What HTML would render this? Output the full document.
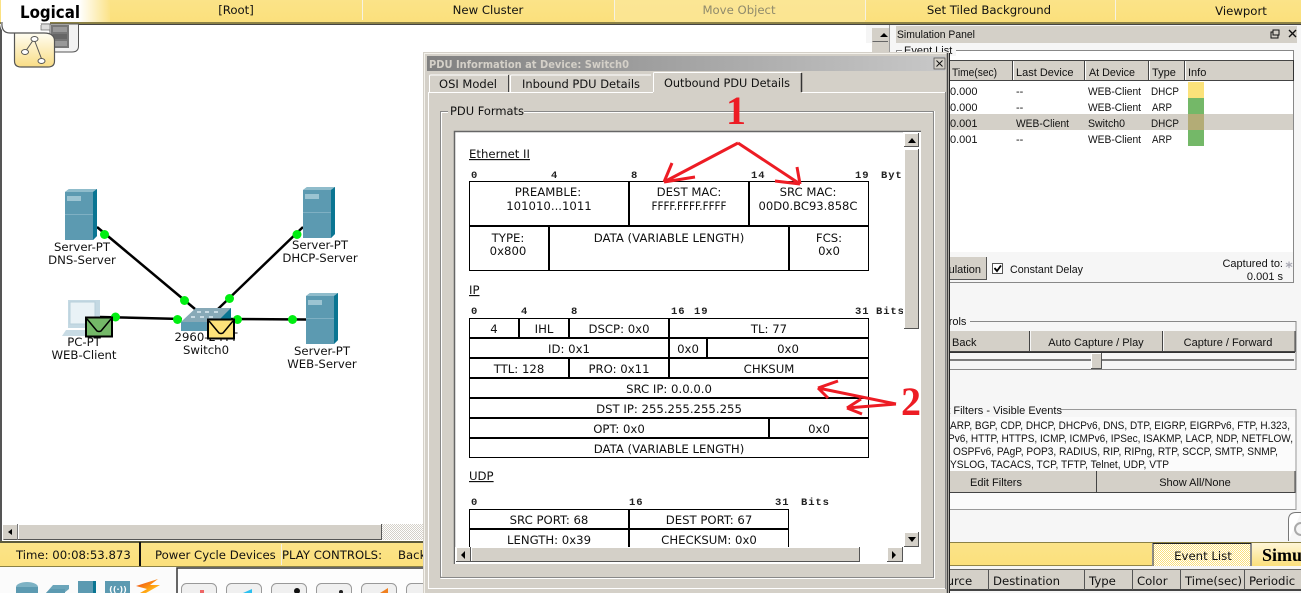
<!DOCTYPE html>
<html><head><meta charset="utf-8"><style>
html,body{margin:0;padding:0;background:#fff;width:1301px;height:593px;overflow:hidden}
svg{display:block}
text{fill:#111}
.v{font:11.7px "DejaVu Sans",sans-serif}
.s{font:11px "Liberation Sans",sans-serif}
.m{font:bold 10.5px "Liberation Mono",monospace;letter-spacing:.9px;fill:#222}
.c{text-anchor:middle}
.e{text-anchor:end}
</style></head><body>
<svg width="1301" height="593" viewBox="0 0 1301 593" xmlns="http://www.w3.org/2000/svg">
<defs>
<linearGradient id="y" x1="0" y1="0" x2="0" y2="1"><stop offset="0" stop-color="#fbe388"/><stop offset="1" stop-color="#fbe07c"/></linearGradient>
<linearGradient id="lg" x1="0" y1="0" x2="1" y2="0"><stop offset="0" stop-color="#fff"/><stop offset=".72" stop-color="#fff"/><stop offset="1" stop-color="#fbe388"/></linearGradient>
<linearGradient id="ic" x1="0" y1="0" x2="0" y2="1"><stop offset="0" stop-color="#fffdf2"/><stop offset="1" stop-color="#f9dd85"/></linearGradient>
<linearGradient id="tb" x1="0" y1="0" x2="1" y2="0"><stop offset="0" stop-color="#808080"/><stop offset="1" stop-color="#c8c8c8"/></linearGradient>
<linearGradient id="si" x1="0" y1="0" x2="0" y2="1"><stop offset="0" stop-color="#fff6d8"/><stop offset="1" stop-color="#fbe07c"/></linearGradient>
<linearGradient id="bolt" x1="0" y1="0" x2="1" y2="1"><stop offset="0" stop-color="#e8341c"/><stop offset=".6" stop-color="#ffa010"/><stop offset="1" stop-color="#ffe040"/></linearGradient>
<pattern id="d" width="2" height="2" patternUnits="userSpaceOnUse"><rect width="2" height="2" fill="#fff"/><rect width="1" height="1" fill="#d4d0c8"/><rect x="1" y="1" width="1" height="1" fill="#d4d0c8"/></pattern>
<pattern id="dy" width="2" height="2" patternUnits="userSpaceOnUse"><rect width="2" height="2" fill="#fff"/><rect width="1" height="1" fill="#fbe07c"/><rect x="1" y="1" width="1" height="1" fill="#fbe07c"/></pattern>
<g id="srv"><path d="M0 3 L4 0 H32 V47 L28 51 H0Z" fill="#5c9ab1"/><path d="M0 3 L4 0 H32 L28 3Z" fill="#8fbccb"/><path d="M28 3 L32 0 V47 L28 51Z" fill="#0a7592"/><rect x="2" y="7" width="14" height="5" fill="#9cc4d2"/><rect y="25" width="28" height="1" fill="#7fb0c3"/></g>
</defs>

<!-- canvas -->
<rect width="1301" height="593" fill="#fff"/>
<rect x="0" y="24" width="2" height="518" fill="#555"/>

<!-- top bar -->
<rect x="0" y="0" width="1301" height="22" fill="url(#y)"/>
<rect x="0" y="22" width="1301" height="2" fill="#8b8146"/>
<rect x="0" y="24" width="1301" height="1" fill="#444"/>
<rect x="362" y="0" width="1" height="20" fill="#f6f2e2"/>
<rect x="614" y="0" width="1" height="20" fill="#f6f2e2"/>
<rect x="865" y="0" width="1" height="20" fill="#f6f2e2"/>
<rect x="1115" y="0" width="1" height="20" fill="#f6f2e2"/>
<rect x="615" y="0" width="250" height="22" fill="#fbe79a" opacity=".7"/>
<path d="M0 0 H110 V22 H50 V33 H10 Q1 33 1 25 V0Z" fill="url(#lg)"/>
<text x="20" y="18" textLength="60" lengthAdjust="spacingAndGlyphs" style="font:bold 17px 'DejaVu Sans',sans-serif;fill:#000">Logical</text>
<text class="v c" x="236" y="14">[Root]</text>
<text class="v c" x="488" y="14">New Cluster</text>
<text class="v c" x="739" y="14" style="fill:#8f8a6c">Move Object</text>
<text class="v c" x="989" y="14">Set Tiled Background</text>
<text class="v c" x="1241" y="15">Viewport</text>

<!-- logical tabs icons -->
<path d="M41 24 H78.500 V46 Q78.500 52 72 52 H50 V24Z" fill="#f2f2f2" stroke="#555"/>
<rect x="51" y="25" width="18" height="23" fill="#777"/>
<rect x="53" y="27" width="14" height="5" fill="#999"/><rect x="53" y="34" width="14" height="5" fill="#666"/><rect x="53" y="41" width="14" height="5" fill="#999"/>
<rect x="41" y="24" width="9" height="6" fill="#ddd" stroke="#666" stroke-width=".7"/>
<path d="M14.500 33 H44 Q54.500 33 54.500 41 V61 Q54.500 67 48 67 H21 Q14.500 67 14.500 61Z" fill="url(#ic)" stroke="#555" stroke-width="1.200"/>
<path d="M0 24 Q1 33 8 33 H15 V25 H41 V24Z" fill="#fff"/>
<path d="M2 22 Q1 33 10 33 H15" fill="none" stroke="#555" stroke-width="1.200"/>
<g fill="#fff" stroke="#555"><path d="M34 39 L42 60 M34 39 L25 52" fill="none"/><ellipse cx="34.500" cy="39" rx="3.500" ry="2.500"/><ellipse cx="25" cy="52" rx="3.500" ry="2.500"/><ellipse cx="41.500" cy="61" rx="3.500" ry="2.500"/></g>

<!-- network -->
<g stroke="#000" stroke-width="2.500" fill="none">
<path d="M97 227 L195 309"/><path d="M303 227 L218 309"/><path d="M100 317 L182 319"/><path d="M228 319 L306 319.500"/>
</g>
<use href="#srv" x="65" y="189"/>
<use href="#srv" x="303" y="187"/>
<use href="#srv" x="306" y="293"/>
<!-- PC -->
<path d="M68 300 H100 V328 H68Z" fill="#c4d9e3"/><rect x="70" y="302" width="25" height="22" fill="#e9f2f6" stroke="#b8d0db"/>
<path d="M66 330 H98 L92 336 H62Z" fill="#c8dbe4"/>
<!-- switch -->
<path d="M181 322 L196 308 H231 V322 L218 331 H181Z" fill="#5c9ab1"/>
<path d="M181 322 L196 308 H231 L217 322Z" fill="#87a9b7"/>
<g fill="#c8dbe4"><rect x="197" y="311" width="4" height="2"/><rect x="205" y="311" width="4" height="2"/><rect x="214" y="311" width="4" height="2"/><rect x="191" y="316" width="4" height="2"/><rect x="200" y="316" width="4" height="2"/><rect x="209" y="316" width="4" height="2"/></g>
<path d="M217 322 L231 308 V322 L218 331Z" fill="#0a7592"/>
<g fill="#00ee11"><circle cx="104.500" cy="234.500" r="4.500"/><circle cx="184.500" cy="300.500" r="4.500"/><circle cx="297" cy="234.500" r="4.500"/><circle cx="229.500" cy="298.500" r="4.500"/><circle cx="115.500" cy="317" r="4.500"/><circle cx="177.500" cy="319.500" r="4.500"/><circle cx="237.500" cy="319.500" r="4.500"/><circle cx="292.500" cy="319.500" r="4.500"/></g>
<text class="v c" x="82" y="251">Server-PT</text><text class="v c" x="82" y="264">DNS-Server</text>
<text class="v c" x="320" y="249">Server-PT</text><text class="v c" x="320" y="262">DHCP-Server</text>
<text class="v c" x="84" y="346">PC-PT</text><text class="v c" x="84" y="359">WEB-Client</text>
<text class="v c" x="206" y="341">2960-24TT</text><text class="v c" x="206" y="354">Switch0</text>
<text class="v c" x="322" y="355">Server-PT</text><text class="v c" x="322" y="368">WEB-Server</text>
<!-- envelopes -->
<rect x="86" y="317.500" width="26" height="19" fill="#74b868" stroke="#000" stroke-width="2"/>
<path d="M87 319 L97 331 Q99 332 101 331 L111 319" fill="none" stroke="#000" stroke-width="1.500"/>
<rect x="208" y="319.500" width="26" height="19" fill="#fde27a" stroke="#000" stroke-width="2"/>
<path d="M209 321 L219 333 Q221 334 223 333 L233 321" fill="none" stroke="#000" stroke-width="1.500"/>

<!-- canvas scrollbar -->
<rect x="382" y="524" width="42" height="16" fill="url(#d)"/>
<rect x="3" y="524" width="379" height="16" fill="#d4d0c8"/>
<path d="M3.500 539.500 H381.500 V524" fill="none" stroke="#555"/>
<path d="M3 524.500 H381" stroke="#fff"/>
<path d="M17.500 524 V540" stroke="#777"/><path d="M18.500 525 V539" stroke="#fff"/>
<path d="M12 529 L8 532 L12 535Z" fill="#000"/>

<!-- status bar -->
<rect x="0" y="541" width="430" height="2" fill="#5c5a3c"/>
<rect x="0" y="543" width="430" height="23" fill="url(#y)"/>
<rect x="0" y="566" width="430" height="1" fill="#8b8146"/>
<rect x="139" y="542" width="2" height="24" fill="#111"/>
<rect x="281" y="544" width="1" height="21" fill="#f2f0e4"/>
<text class="v" x="16" y="559">Time: 00:08:53.873</text>
<text class="v" x="155" y="559">Power Cycle Devices</text>
<text class="v" x="282" y="559" textLength="100" lengthAdjust="spacingAndGlyphs">PLAY CONTROLS:</text>
<text class="v" x="398" y="559">Back</text>
<!-- device toolbar -->
<rect x="0" y="567" width="176" height="26" fill="#fbfbfb"/>
<path d="M177 593 V568 H430" fill="none" stroke="#333" stroke-width="1.500"/>
<rect x="178" y="569" width="252" height="24" fill="#fdfdfd"/>
<ellipse cx="27" cy="587" rx="11" ry="5" fill="#7db2c4"/><path d="M16 587 V593 H38 V587Z" fill="#5c9ab1"/>
<path d="M46 593 L53 585 H69 V589 L64 593Z" fill="#6ba5ba"/><path d="M46 593 L50 589 H65 V593Z" fill="#5c9ab1"/>
<rect x="78" y="581" width="18" height="12" fill="#5c9ab1"/><rect x="93" y="581" width="3" height="12" fill="#0a7592"/>
<rect x="105" y="581" width="25" height="12" fill="#5c9ab1"/><text x="118" y="592" class="c" style="font:bold 8px 'DejaVu Sans',sans-serif;fill:#fff">((·))</text>
<path d="M136 586 L158 579 L150 585 L160 585 L146 593 H140 L147 589Z" fill="url(#bolt)"/>
<g fill="#f0f0f0" stroke="#999"><rect x="181.500" y="583.500" width="35" height="20" rx="5"/><rect x="226.500" y="583.500" width="35" height="20" rx="5"/><rect x="271.500" y="583.500" width="35" height="20" rx="5"/><rect x="316.500" y="583.500" width="35" height="20" rx="5"/><rect x="361.500" y="583.500" width="35" height="20" rx="5"/><rect x="406.500" y="583.500" width="35" height="20" rx="5"/></g>
<rect x="200" y="590" width="4" height="3" fill="#e66"/><path d="M243 593 L252 589 V593Z" fill="#2cc0f0"/><circle cx="297" cy="591" r="3" fill="#111"/><circle cx="341" cy="592" r="2" fill="#222"/><path d="M380 593 L388 588 V593Z" fill="#f08020"/>

<!-- right region -->
<rect x="866" y="25" width="435" height="18" fill="#f5f5f5"/>
<rect x="872" y="28" width="17" height="25" fill="#d4d0c8"/>
<path d="M872.500 41.500 H888" stroke="#666"/><path d="M880 37 L884 33 L888 37Z" fill="#000"/>
<rect x="889" y="25" width="412" height="568" fill="#f6f6f6"/>
<rect x="889" y="25" width="1" height="568" fill="#999"/>
<rect x="896" y="26" width="401" height="17" fill="#d4d0c8"/>
<text class="s" x="897" y="38" textLength="78" lengthAdjust="spacingAndGlyphs">Simulation Panel</text>
<rect x="1271" y="32" width="7" height="6" fill="none" stroke="#111"/><rect x="1273" y="30" width="6" height="5" fill="#d4d0c8" stroke="#111"/>
<path d="M1289 30 L1296 37 M1296 30 L1289 37" stroke="#111" stroke-width="1.400"/>

<!-- event list -->
<rect x="896.500" y="50.500" width="397" height="232" fill="#fff" stroke="#888"/>
<rect x="897" y="252" width="396" height="30" fill="#f6f6f6"/>
<path d="M896.500 282.500 H1293.500" stroke="#888"/>
<rect x="902" y="44" width="54" height="12" fill="#f6f6f6"/>
<text class="s" x="904" y="54">Event List</text>
<rect x="895" y="60" width="399" height="21" fill="#d4d0c8"/>
<path d="M895 60.500 H1294 M895 80.500 H1294" stroke="#444"/>
<path d="M1293.500 60 V81" stroke="#333"/>
<g stroke="#444"><path d="M1012.500 60 V81"/><path d="M1084.500 60 V81"/><path d="M1148.500 60 V81"/><path d="M1184.500 60 V81"/></g>
<g stroke="#fff"><path d="M1013.500 61 V80"/><path d="M1085.500 61 V80"/><path d="M1149.500 61 V80"/><path d="M1185.500 61 V80"/></g>
<text class="s" x="952" y="76" textLength="45" lengthAdjust="spacingAndGlyphs">Time(sec)</text>
<text class="s" x="1016" y="76">Last Device</text>
<text class="s" x="1089" y="76" textLength="46" lengthAdjust="spacingAndGlyphs">At Device</text>
<text class="s" x="1152" y="76">Type</text>
<text class="s" x="1188" y="76">Info</text>
<rect x="950" y="114" width="343" height="16" fill="#d4d0c8"/>
<rect x="1188" y="82" width="16" height="16" fill="#fbe27a"/>
<rect x="1188" y="98" width="16" height="16" fill="#74b868"/>
<rect x="1188" y="114" width="16" height="16" fill="#b3ac76"/>
<rect x="1188" y="130" width="16" height="16" fill="#74b868"/>
<text class="s" x="950" y="95">0.000</text><text class="s" x="1016" y="95">--</text><text class="s" x="1088" y="95" textLength="53" lengthAdjust="spacingAndGlyphs">WEB-Client</text><text class="s" x="1151" y="95" textLength="28" lengthAdjust="spacingAndGlyphs">DHCP</text>
<text class="s" x="950" y="111">0.000</text><text class="s" x="1016" y="111">--</text><text class="s" x="1088" y="111" textLength="53" lengthAdjust="spacingAndGlyphs">WEB-Client</text><text class="s" x="1152" y="111" textLength="20" lengthAdjust="spacingAndGlyphs">ARP</text>
<text class="s" x="950" y="127">0.001</text><text class="s" x="1016" y="127" textLength="53" lengthAdjust="spacingAndGlyphs">WEB-Client</text><text class="s" x="1088" y="127" textLength="37" lengthAdjust="spacingAndGlyphs">Switch0</text><text class="s" x="1151" y="127" textLength="28" lengthAdjust="spacingAndGlyphs">DHCP</text>
<text class="s" x="950" y="143">0.001</text><text class="s" x="1016" y="143">--</text><text class="s" x="1088" y="143" textLength="53" lengthAdjust="spacingAndGlyphs">WEB-Client</text><text class="s" x="1152" y="143" textLength="20" lengthAdjust="spacingAndGlyphs">ARP</text>
<!-- capture row -->
<rect x="900" y="257" width="86" height="23" fill="#d4d0c8"/>
<path d="M900 279.500 H986.500 V257" fill="none" stroke="#555"/>
<text class="s" x="981" y="273" style="text-anchor:end">Reset Simulation</text>
<rect x="992.500" y="263.500" width="10" height="10" fill="#fff" stroke="#555"/>
<path d="M994.500 268 L997 271 L1001 265.500" fill="none" stroke="#000" stroke-width="1.800"/>
<text class="s" x="1010" y="273" textLength="73" lengthAdjust="spacingAndGlyphs">Constant Delay</text>
<text class="s e" x="1283" y="267">Captured to:</text>
<text class="s e" x="1283" y="280">0.001 s</text>
<text x="1289" y="272" class="c" style="font:bold 14px 'DejaVu Sans',sans-serif;fill:#a9a9b4">*</text>
<!-- play controls -->
<path d="M896 321.500 H1296 V369.500 H896" fill="none" stroke="#888"/>
<rect x="903" y="315" width="67" height="12" fill="#f6f6f6"/>
<text class="s" x="901" y="325">Play Controls</text>
<g fill="#d4d0c8"><rect x="900" y="331" width="130" height="21"/><rect x="1031" y="331" width="132" height="21"/><rect x="1164" y="331" width="131" height="21"/></g>
<path d="M900 351.500 H1295 V331 M1029.500 331 V352 M1162.500 331 V352" fill="none" stroke="#444"/>
<path d="M900 352.500 H1295" stroke="#333"/>
<text class="s" x="952" y="346">Back</text>
<text class="s c" x="1096" y="346">Auto Capture / Play</text>
<text class="s c" x="1228" y="346">Capture / Forward</text>
<path d="M900 360 H1294" stroke="#555" stroke-width="1.500"/>
<rect x="1091" y="353" width="11" height="16" fill="#d4d0c8"/>
<path d="M1091.500 368.500 V353.500 H1101" fill="none" stroke="#fff"/><path d="M1091 368.500 H1101.500 V353" fill="none" stroke="#555"/>
<!-- filters -->
<path d="M896 409.500 H1296 V509.500 H896" fill="none" stroke="#999"/>
<rect x="905" y="403" width="155" height="12" fill="#f6f6f6"/>
<text class="s" x="902" y="414">Event List Filters - Visible Events</text>
<rect x="897" y="417" width="398" height="54" fill="#fbfbfb"/>
<rect x="897" y="493" width="398" height="16" fill="#fbfbfb"/>
<text class="s" x="950" y="429" textLength="340" lengthAdjust="spacingAndGlyphs">ARP, BGP, CDP, DHCP, DHCPv6, DNS, DTP, EIGRP, EIGRPv6, FTP, H.323,</text>
<text class="s" x="948" y="442" textLength="345" lengthAdjust="spacingAndGlyphs">Pv6, HTTP, HTTPS, ICMP, ICMPv6, IPSec, ISAKMP, LACP, NDP, NETFLOW,</text>
<text class="s" x="953" y="455" textLength="325" lengthAdjust="spacingAndGlyphs">OSPFv6, PAgP, POP3, RADIUS, RIP, RIPng, RTP, SCCP, SMTP, SNMP,</text>
<text class="s" x="950" y="468" textLength="219" lengthAdjust="spacingAndGlyphs">YSLOG, TACACS, TCP, TFTP, Telnet, UDP, VTP</text>
<g fill="#d4d0c8"><rect x="900" y="471" width="196" height="21"/><rect x="1097" y="471" width="198" height="21"/></g>
<path d="M900 492.500 H1295 V471 M1096.500 471 V493" fill="none" stroke="#444"/>
<text class="s c" x="996" y="486">Edit Filters</text>
<text class="s c" x="1195" y="486">Show All/None</text>
<!-- corner tab -->
<path d="M1288.500 541 V520 Q1288.500 512.500 1296 512.500 H1301" fill="#fff" stroke="#777"/>
<circle cx="1301" cy="529" r="6" fill="none" stroke="#aaa" stroke-width="2"/>
<!-- bottom right -->
<rect x="949" y="542" width="352" height="1" fill="#8b8146"/>
<rect x="949" y="543" width="203" height="23" fill="url(#y)"/>
<path d="M949 566 H1152" stroke="#6f6736" stroke-width="1.500"/>
<rect x="1153" y="543" width="97" height="23" fill="url(#dy)"/>
<path d="M1153 543.500 H1251 V566 M1153 543 V566" fill="none" stroke="#222"/>
<text class="v c" x="1203" y="560">Event List</text>
<rect x="1252" y="543" width="49" height="23" fill="url(#si)"/>
<text x="1262" y="561" style="font:bold 18px 'Liberation Serif',serif;fill:#000">Simu</text>
<rect x="949" y="566" width="352" height="2" fill="#f6f6f6"/>
<rect x="949" y="569" width="352" height="21" fill="#d4d0c8"/>
<path d="M949 569.500 H1301" stroke="#666"/>
<rect x="949" y="589" width="352" height="2" fill="#444"/>
<rect x="949" y="591" width="352" height="2" fill="#f6f6f6"/>
<g stroke="#555"><path d="M988.500 570 V590"/><path d="M1084.500 570 V590"/><path d="M1132.500 570 V590"/><path d="M1180.500 570 V590"/><path d="M1244.500 570 V590"/></g>
<text class="v" x="932" y="585">Source</text>
<text class="v" x="993" y="585">Destination</text>
<text class="v" x="1089" y="585">Type</text>
<text class="v" x="1137" y="585">Color</text>
<text class="v" x="1185" y="585" textLength="57" lengthAdjust="spacingAndGlyphs">Time(sec)</text>
<text class="v" x="1249" y="585">Periodic</text>

<!-- DIALOG -->
<rect x="423" y="52" width="526" height="541" fill="#d4d0c8"/>
<path d="M424.500 593 V53.500 H947" fill="none" stroke="#f4f2ec"/>
<path d="M947.500 53 V593" stroke="#444" stroke-width="1.500"/>
<path d="M949.500 53 V593" stroke="#222"/>
<rect x="427" y="56" width="518" height="15" fill="url(#tb)"/>
<text x="429" y="68" textLength="200" lengthAdjust="spacingAndGlyphs" style="font:bold 11px 'DejaVu Sans',sans-serif;fill:#d4d0c8">PDU Information at Device: Switch0</text>
<rect x="934" y="58" width="11" height="11" fill="#d4d0c8" stroke="#555" stroke-width=".8"/>
<path d="M936.500 60.500 L942.500 66.500 M942.500 60.500 L936.500 66.500" stroke="#111"/>
<!-- tabs -->
<path d="M428 92.500 H653 M802 92.500 H945" stroke="#fff"/>
<path d="M428.500 92 V588.500 H945.500 V92" fill="none" stroke="#fff"/>
<path d="M945.500 92 V589" stroke="#888"/>
<path d="M429.500 92 V76 Q429.500 75 431 75 H508" fill="none" stroke="#fff"/><path d="M508.500 75 V92" stroke="#444"/>
<path d="M510.500 92 V76 Q510.500 75 512 75 H651" fill="none" stroke="#fff"/>
<path d="M653.500 92 V73 Q653.500 72.500 655 72.500 H801" fill="none" stroke="#fff"/><path d="M801.500 73 V92" stroke="#333" stroke-width="1.500"/>
<text class="v" x="439" y="88" textLength="58" lengthAdjust="spacingAndGlyphs">OSI Model</text>
<text class="v" x="522" y="88" textLength="118" lengthAdjust="spacingAndGlyphs">Inbound PDU Details</text>
<text class="v" x="664" y="87" textLength="126" lengthAdjust="spacingAndGlyphs">Outbound PDU Details</text>
<!-- group -->
<path d="M440.500 111.500 H933.500 V577.500 H440.500Z" fill="none" stroke="#888"/>
<path d="M441.500 576.500 V112.500 H932.500 M440.500 578.500 H934.500 V111" fill="none" stroke="#fff"/>
<rect x="448" y="105" width="76" height="12" fill="#d4d0c8"/>
<text class="v" x="450" y="115" textLength="74" lengthAdjust="spacingAndGlyphs">PDU Formats</text>
<!-- white -->
<rect x="454" y="131" width="467" height="433" fill="#fff"/>
<path d="M454.500 564 V131.500 H921" fill="none" stroke="#666" stroke-width="1.500"/>

<g stroke="#000" fill="none">
<!-- ethernet -->
<path d="M469.500 181.500 H868.500 V270.500 H469.500Z"/>
<path d="M469 226 H869" stroke-width="2"/>
<path d="M629 181 V226 M749 181 V226 M549 226 V270 M789 226 V270" stroke-width="2"/>
<!-- ip -->
<path d="M469.500 318.500 H868.500 V457.500 H469.500Z"/>
<path d="M469 338 H869 M469 358 H869 M469 378 H869 M469 398 H869 M469 418 H869 M469 438 H869" stroke-width="2"/>
<path d="M519 318 V338 M569 318 V338 M669 318 V378 M707 338 V358 M569 358 V378 M769 418 V438" stroke-width="2"/>
<!-- udp -->
<path d="M469.500 547 V509.500 H788.500 V547"/>
<path d="M469 529 H789" stroke-width="2"/>
<path d="M629 509 V547" stroke-width="2"/>
</g>
<text x="469" y="158" class="v" style="text-decoration:underline">Ethernet II</text>
<text class="m" x="471" y="178">0</text><text class="m" x="551" y="178">4</text><text class="m" x="631" y="178">8</text><text class="m" x="751" y="178">14</text><text class="m" x="855" y="178">19</text><text class="m" x="881" y="178">Byt</text>
<text class="v c" x="548" y="196">PREAMBLE:</text><text class="v c" x="549" y="210">101010...1011</text>
<text class="v c" x="689" y="196">DEST MAC:</text><text class="v c" x="689" y="210" textLength="75" lengthAdjust="spacingAndGlyphs">FFFF.FFFF.FFFF</text>
<text class="v c" x="808" y="196">SRC MAC:</text><text class="v c" x="808" y="210" textLength="99" lengthAdjust="spacingAndGlyphs">00D0.BC93.858C</text>
<text class="v c" x="508" y="242">TYPE:</text><text class="v c" x="508" y="255">0x800</text>
<text class="v c" x="669" y="242">DATA (VARIABLE LENGTH)</text>
<text class="v c" x="829" y="242">FCS:</text><text class="v c" x="829" y="255">0x0</text>

<text x="469" y="294" class="v" style="text-decoration:underline">IP</text>
<text class="m" x="471" y="314">0</text><text class="m" x="521" y="314">4</text><text class="m" x="571" y="314">8</text><text class="m" x="671" y="314">16</text><text class="m" x="694" y="314">19</text><text class="m" x="855" y="314">31</text><text class="m" x="876" y="314">Bits</text>
<text class="v c" x="494" y="333">4</text><text class="v c" x="544" y="333">IHL</text><text class="v c" x="619" y="333">DSCP: 0x0</text><text class="v c" x="769" y="333">TL: 77</text>
<text class="v c" x="569" y="353">ID: 0x1</text><text class="v c" x="688" y="353">0x0</text><text class="v c" x="788" y="353">0x0</text>
<text class="v c" x="519" y="373">TTL: 128</text><text class="v c" x="619" y="373">PRO: 0x11</text><text class="v c" x="769" y="373">CHKSUM</text>
<text class="v c" x="669" y="393">SRC IP: 0.0.0.0</text>
<text class="v c" x="669" y="413">DST IP: 255.255.255.255</text>
<text class="v c" x="619" y="433">OPT: 0x0</text><text class="v c" x="819" y="433">0x0</text>
<text class="v c" x="669" y="453">DATA (VARIABLE LENGTH)</text>

<text x="469" y="480" class="v" style="text-decoration:underline">UDP</text>
<text class="m" x="471" y="505">0</text><text class="m" x="629" y="505">16</text><text class="m" x="775" y="505">31</text><text class="m" x="801" y="505">Bits</text>
<text class="v c" x="549" y="524">SRC PORT: 68</text><text class="v c" x="709" y="524">DEST PORT: 67</text>
<text class="v c" x="549" y="544">LENGTH: 0x39</text><text class="v c" x="709" y="544">CHECKSUM: 0x0</text>

<!-- scrollbars -->
<rect x="903" y="132" width="18" height="432" fill="#fff"/>
<rect x="455" y="547" width="466" height="17" fill="#fff"/>
<rect x="904" y="133" width="15" height="14" fill="#d4d0c8"/>
<rect x="904" y="149" width="15" height="180" fill="#d4d0c8"/>
<rect x="904" y="532" width="15" height="15" fill="#d4d0c8"/>
<path d="M904.500 147 V133.500 H919 M904.500 329 V149.500 H919 M904.500 547 V532.500 H919" fill="none" stroke="#fff"/>
<path d="M904 146.500 H918.500 V133 M904 328.500 H918.500 V149 M904 546.500 H918.500 V532" fill="none" stroke="#555"/>
<path d="M908 143 L912 138 L916 143Z" fill="#000"/><path d="M908 537 L912 542 L916 537Z" fill="#000"/>
<rect x="456" y="547" width="14" height="15" fill="#d4d0c8"/>
<rect x="471" y="547" width="388" height="15" fill="#d4d0c8"/>
<rect x="887" y="547" width="15" height="15" fill="#d4d0c8"/>
<path d="M456.500 562 V547.500 H470 M471.500 562 V547.500 H859 M887.500 562 V547.500 H902" fill="none" stroke="#fff"/>
<path d="M456 561.500 H470.500 V547 M471 561.500 H859.500 V547 M887 561.500 H902.500 V547" fill="none" stroke="#555"/>
<path d="M465 551 L461 555 L465 559Z" fill="#000"/><path d="M892 551 L896 555 L892 559Z" fill="#000"/>

<!-- annotations -->
<g fill="none" stroke="#ed1c24" stroke-width="3">
<path d="M738 143 L664 182 M664 182 L672 163 M664 182 L695 177"/>
<path d="M738 143 L800 184 M800 184 L797 167 M800 184 L775 181"/>
<path d="M896 404 L818 388 M818 388 L838 381 M818 388 L828 398"/>
<path d="M896 404 L847 408 M847 408 L861 399 M847 408 L862 414"/>
</g>
<text x="736" y="124" class="c" style="font:bold 40px 'Liberation Serif',serif;fill:#ed1c24">1</text>
<text x="911" y="415" class="c" style="font:bold 40px 'Liberation Serif',serif;fill:#ed1c24">2</text>
</svg>
</body></html>
